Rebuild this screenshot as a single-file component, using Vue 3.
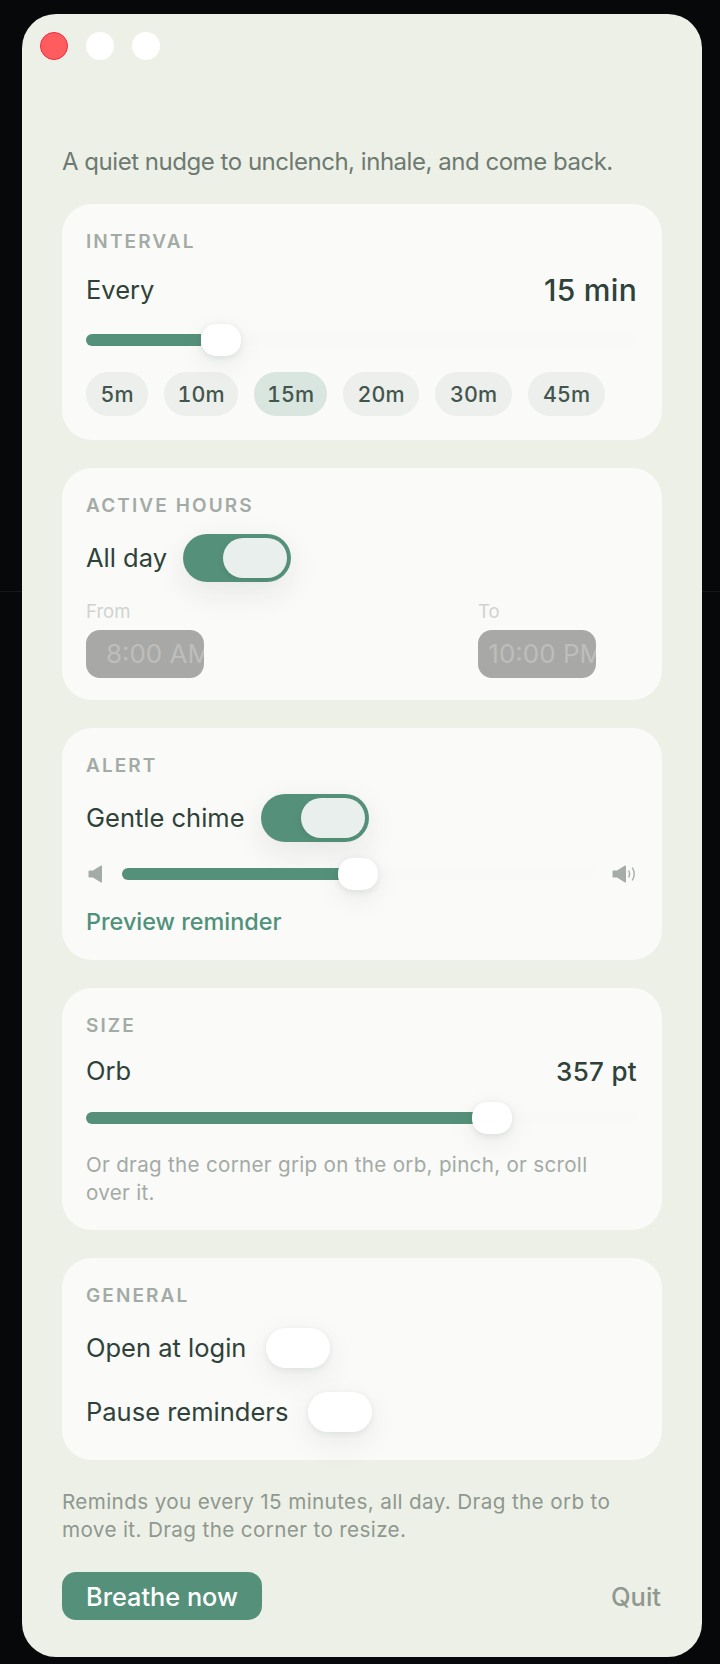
<template>
  <div class="page">
    <div class="hairline"></div>
    <main class="window">
      <div class="lights">
        <span class="light red"></span>
        <span class="light"></span>
        <span class="light"></span>
      </div>
      <p class="tagline">A quiet nudge to unclench, inhale, and come back.</p>

      <section class="card">
        <h2 class="label">INTERVAL</h2>
        <div class="row row-interval">
          <span class="text">Every</span>
          <span class="value big">15 min</span>
        </div>
        <div class="slider interval-slider">
          <div class="fill" :style="{ width: '115px' }"></div>
          <div class="thumb"></div>
        </div>
        <div class="chips">
          <span
            v-for="c in chips"
            :key="c.label"
            class="chip"
            :class="{ on: c.label === '15m' }"
            :style="{ width: c.width + 'px' }"
          >{{ c.label }}</span>
        </div>
      </section>

      <section class="card card-hours">
        <h2 class="label">ACTIVE HOURS</h2>
        <div class="toggle-row">
          <span class="text">All day</span>
          <span class="switch on"><span class="knob"></span></span>
        </div>
        <div class="times">
          <div class="time-col">
            <span class="time-label">From</span>
            <div class="time-box"><span>8:00 AM</span></div>
          </div>
          <div class="time-col">
            <span class="time-label">To</span>
            <div class="time-box"><span>10:00 PM</span></div>
          </div>
        </div>
      </section>

      <section class="card card-alert">
        <h2 class="label">ALERT</h2>
        <div class="toggle-row">
          <span class="text">Gentle chime</span>
          <span class="switch on"><span class="knob"></span></span>
        </div>
        <div class="volume">
          <svg class="vol-icon" viewBox="0 0 24 18" width="24" height="18">
            <path d="M3.500 5.500h3.500L15 .5c.5-.3 1 0 1 .5v16c0 .5-.5.8-1 .5l-8-5H3.500c-.5 0-1-.5-1-1V6.500c0-.5.5-1 1-1z" fill="#a5aca8" />
          </svg>
          <div class="slider vol-slider">
            <div class="fill" :style="{ width: '236px' }"></div>
            <div class="thumb"></div>
          </div>
          <svg class="vol-icon vol-high" viewBox="0 0 24 18" width="24" height="18">
            <path d="M1.500 5.500h3.500L13 .5c.5-.3 1 0 1 .5v16c0 .5-.5.8-1 .5l-8-5H1.500c-.5 0-1-.5-1-1V6.500c0-.5.5-1 1-1z" fill="#a5aca8" />
            <path d="M16.800 6c1 1.900 1 4.100 0 6M20.500 3c2 3.500 2 8.500 0 12" fill="none" stroke="#a5aca8" stroke-width="1.400" stroke-linecap="round" />
          </svg>
        </div>
        <a class="preview">Preview reminder</a>
      </section>

      <section class="card card-size">
        <h2 class="label">SIZE</h2>
        <div class="row row-size">
          <span class="text">Orb</span>
          <span class="value">357 pt</span>
        </div>
        <div class="slider size-slider">
          <div class="fill" :style="{ width: '406px' }"></div>
          <div class="thumb"></div>
        </div>
        <p class="hint">Or drag the corner grip on the orb, pinch, or scroll over it.</p>
      </section>

      <section class="card">
        <h2 class="label">GENERAL</h2>
        <div class="toggle-row">
          <span class="text">Open at login</span>
          <span class="switch off"><span class="knob"></span></span>
        </div>
        <div class="toggle-row second">
          <span class="text">Pause reminders</span>
          <span class="switch off"><span class="knob"></span></span>
        </div>
      </section>

      <p class="note">Reminds you every 15 minutes, all day. Drag the orb to move it. Drag the corner to resize.</p>

      <footer class="actions">
        <button class="primary">Breathe now</button>
        <button class="quit">Quit</button>
      </footer>
    </main>
  </div>
</template>

<script setup>
const chips = [
  { label: '5m', width: 62 },
  { label: '10m', width: 74 },
  { label: '15m', width: 73 },
  { label: '20m', width: 76 },
  { label: '30m', width: 77 },
  { label: '45m', width: 77 },
]
</script>

<style>
html, body { margin: 0; background: #07080a; }
</style>

<style scoped>
.page {
  position: relative;
  width: 720px;
  height: 1664px;
  box-sizing: border-box;
  padding: 14px 18px 0 22px;
  background: #07080a;
  overflow: hidden;
  font-family: Inter, "Liberation Sans", sans-serif;
  color: #2e4239;
}
.hairline {
  position: absolute;
  left: 0;
  right: 0;
  top: 591px;
  height: 1px;
  background: #17181a;
}
.window {
  position: relative;
  width: 680px;
  height: 1643px;
  box-sizing: border-box;
  padding: 18px 40px 0;
  border-radius: 34px;
  background: #edf0e6;
}
.lights { display: flex; gap: 18px; margin-left: -22px; height: 28px; }
.light { width: 28px; height: 28px; border-radius: 50%; background: #fff; }
.light.red { background: #ff5c60; box-sizing: border-box; border: 1px solid #f0283c; }
.tagline {
  margin: 88px 0 28px;
  font-size: 24px;
  line-height: 28px;
  letter-spacing: -0.47px;
  color: #6d7a72;
}
.card {
  background: #fafaf8;
  border-radius: 30px;
  padding: 24px;
  margin-bottom: 28px;
}
.card-hours { padding-bottom: 22px; }
.card-alert { padding-bottom: 22px; }
.card-size { padding-bottom: 23px; }
.label {
  margin: 0 0 18px;
  padding-top: 4px;
  font-size: 19px;
  font-weight: 600;
  line-height: 20px;
  letter-spacing: 2.100px;
  color: #a3aba6;
}
.text { font-size: 25.500px; line-height: 34px; color: #2e4239; }
.row { display: flex; align-items: center; justify-content: space-between; }
.row-interval { height: 40px; margin-bottom: 14px; }
.row-size { height: 34px; margin-bottom: 14px; }
.value {
  margin-right: 1px;
  font-size: 26px;
  font-weight: 500;
  color: #2e4239;
  letter-spacing: 0.300px;
}
.value.big { font-size: 30px; }
.slider {
  position: relative;
  height: 32px;
  flex: 1;
  min-width: 0;
}
.slider::before {
  content: "";
  position: absolute;
  left: 0;
  right: 0;
  top: 10px;
  height: 12px;
  border-radius: 6px;
  background: #f9faf7;
}
.fill {
  position: absolute;
  left: 0;
  top: 10px;
  height: 12px;
  border-radius: 6px 0 0 6px;
  background: #55917a;
}
.thumb {
  position: absolute;
  top: 0;
  width: 40px;
  height: 32px;
  border-radius: 15px;
  background: #fff;
  box-shadow: 0 2px 6px rgba(30, 50, 40, 0.1), 0 8px 28px rgba(30, 50, 40, 0.07);
}
.interval-slider .thumb { left: 115px; }
.vol-slider .thumb { left: 216px; }
.size-slider .thumb { left: 386px; }
.chips { display: flex; gap: 16px; margin-top: 16px; }
.chip {
  height: 44px;
  box-sizing: border-box;
  display: flex;
  align-items: center;
  justify-content: center;
  border-radius: 22px;
  background: #ecefec;
  font-size: 21.500px;
  font-weight: 500;
  font-variant-numeric: tabular-nums;
  color: #43564e;
}
.chip.on { background: #d9e5df; }
.toggle-row { display: flex; align-items: center; gap: 16px; height: 48px; }
.toggle-row.second { margin-top: 16px; }
.switch {
  position: relative;
  display: block;
  flex: none;
  width: 108px;
  height: 48px;
  border-radius: 24px;
}
.switch.on {
  background: #55917a;
  box-shadow: 0 10px 32px rgba(30, 50, 40, 0.09);
}
.knob {
  position: absolute;
  top: 4px;
  width: 64px;
  height: 40px;
  border-radius: 20px;
}
.switch.on .knob {
  right: 4px;
  background: #e9efec;
  box-shadow: -2px 2px 5px rgba(30, 50, 40, 0.08);
}
.switch.off .knob {
  left: 4px;
  background: #fff;
  box-shadow: 0 2px 6px rgba(30, 50, 40, 0.08), 0 10px 32px rgba(30, 50, 40, 0.07);
}
.times { display: flex; gap: 274px; margin-top: 16px; }
.time-col { display: flex; flex-direction: column; gap: 6px; }
.time-label { font-size: 18.500px; line-height: 26px; color: #d0d3d0; }
.time-box {
  display: flex;
  justify-content: flex-end;
  width: 118px;
  height: 48px;
  box-sizing: border-box;
  border-radius: 14px;
  background: #a8a8a7;
  overflow: hidden;
  font-size: 26px;
  line-height: 48px;
  color: #bdbebc;
  white-space: nowrap;
}
.time-box span { margin-right: -7px; flex: none; }
.volume { display: flex; align-items: center; gap: 12px; margin-top: 16px; }
.vol-icon { flex: none; }
.vol-high { margin-right: 2px; }
.preview {
  display: block;
  margin-top: 16px;
  font-size: 23.400px;
  line-height: 32px;
  font-weight: 500;
  color: #4f917a;
}
.hint {
  margin: 17px 0 0;
  max-width: 530px;
  font-size: 20.600px;
  line-height: 28px;
  letter-spacing: 0.300px;
  color: #a3aaa6;
}
.note {
  margin: 1px 0 0;
  max-width: 570px;
  font-size: 20.700px;
  line-height: 28px;
  letter-spacing: 0.350px;
  color: #8f9890;
}
.actions {
  display: flex;
  align-items: center;
  justify-content: space-between;
  margin-top: 28px;
}
button { border: 0; padding: 0; font-family: inherit; background: none; }
.primary {
  width: 200px;
  height: 48px;
  border-radius: 14px;
  background: #55917a;
  color: #fff;
  font-size: 25.300px;
  font-weight: 500;
}
.quit { font-size: 25.500px; font-weight: 500; color: #8f9990; margin-right: 1px; }
</style>
